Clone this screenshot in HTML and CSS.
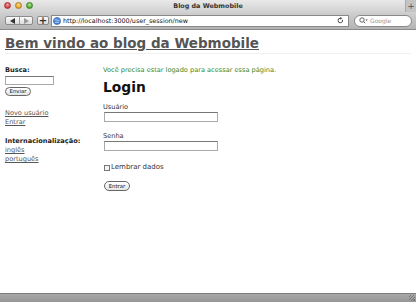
FILE: index.html
```html
<!DOCTYPE html>
<html>
<head>
<meta charset="utf-8">
<title>Blog da Webmobile</title>
<link rel="stylesheet" href="styles.css">
</head>
<body>
<div class="window">
  <div class="titlebar">
    <div class="lights">
      <span class="light red"></span>
      <span class="light yellow"></span>
      <span class="light green"></span>
    </div>
    <div class="title">Blog da Webmobile</div>
    <div class="tabbtn">+</div>
  </div>
  <div class="toolbar">
    <div class="nav">
      <span class="seg"><svg width="6" height="6" viewBox="0 0 6 6"><polygon points="5,0 5,6 0,3" fill="#333"/></svg></span>
      <span class="seg"><svg width="6" height="6" viewBox="0 0 6 6"><polygon points="1,0 1,6 6,3" fill="#999"/></svg></span>
    </div>
    <span class="plus">+</span>
    <div class="url">
      <svg class="globe" width="8" height="8" viewBox="0 0 8 8"><circle cx="4" cy="4" r="3.6" fill="#4a86d8" stroke="#2a5ea8" stroke-width="0.6"/><path d="M1.5 3 Q3 2 4 3 T6.5 3.2 M2 5.5 Q4 4.5 6 5.6" stroke="#dfeaf8" stroke-width="0.7" fill="none"/></svg>
      <span class="urltext">http://localhost:3000/user_session/new</span>
      <svg class="reload" width="7" height="7" viewBox="0 0 8 8"><path d="M6.3 3.2 A2.6 2.6 0 1 1 4 1.4" stroke="#444" stroke-width="1.1" fill="none"/><polygon points="3.6,0 6,1.5 3.6,3" fill="#444"/></svg>
    </div>
    <div class="search">
      <svg width="9" height="7" viewBox="0 0 9 7"><circle cx="3" cy="3" r="2.2" stroke="#555" stroke-width="0.9" fill="none"/><line x1="4.6" y1="4.6" x2="6" y2="6.2" stroke="#555" stroke-width="1"/><polygon points="6.5,2.5 8.8,2.5 7.65,4" fill="#555"/></svg>
      <span class="placeholder">Google</span>
    </div>
  </div>
  <div class="content">
    <h1 class="site-title"><a href="#">Bem vindo ao blog da Webmobile</a></h1>
    <div class="columns">
      <div class="sidebar">
        <div class="label-bold">Busca:</div>
        <div class="field-small"></div>
        <div class="btn">Enviar</div>
        <div class="links">
          <a href="#">Novo usuário</a>
          <a href="#">Entrar</a>
        </div>
        <div class="label-bold">Internacionalização:</div>
        <div class="links tight">
          <a href="#">inglês</a>
          <a href="#">português</a>
        </div>
      </div>
      <div class="main">
        <div class="notice">Você precisa estar logado para acessar essa página.</div>
        <h2 class="login">Login</h2>
        <div class="label">Usuário</div>
        <div class="field"></div>
        <div class="label second">Senha</div>
        <div class="field"></div>
        <div class="check"><span class="box"></span>Lembrar dados</div>
        <div class="btn">Entrar</div>
      </div>
    </div>
  </div>
  <div class="statusbar"><span class="grip"></span></div>
</div>
</body>
</html>
```
FILE: styles.css
```css
* { box-sizing: border-box; }
html, body { margin: 0; padding: 0; }
body { width: 416px; height: 302px; overflow: hidden; font-family: "DejaVu Sans", Verdana, sans-serif; background: #fff; }
.window { width: 416px; height: 302px; display: flex; flex-direction: column; }

.titlebar { height: 12px; position: relative; display: flex; align-items: center; justify-content: center; background: linear-gradient(#e9e9e9, #d2d2d2); }
.lights { position: absolute; left: 4px; top: 2px; display: flex; gap: 4px; }
.light { width: 7px; height: 7px; border-radius: 50%; display: block; }
.red { background: radial-gradient(circle at 50% 35%, #f7a3a3, #d23a3a 70%); border: 0.5px solid #a33; }
.yellow { background: radial-gradient(circle at 50% 35%, #fbe19a, #e3a021 70%); border: 0.5px solid #b07a15; }
.green { background: radial-gradient(circle at 50% 35%, #b6eb9c, #4ca72d 70%); border: 0.5px solid #3a7f22; }
.title { font-family: "DejaVu Sans", sans-serif; font-size: 6.4px; font-weight: bold; color: #333; }
.tabbtn { position: absolute; right: 0; top: 0; width: 11px; height: 12px; border-left: 1px solid #aaa; background: #c4c4c4; font-size: 9px; line-height: 12px; text-align: center; color: #555; }

.toolbar { height: 18px; display: flex; align-items: center; padding: 0 4px 0 5px; background: linear-gradient(#d0d0d0, #b4b4b4); border-bottom: 1px solid #8a8a8a; }
.nav { display: flex; height: 9px; border: 1px solid #8c8c8c; border-radius: 2px; background: linear-gradient(#fafafa, #dcdcdc); }
.seg { width: 13px; display: flex; align-items: center; justify-content: center; }
.seg + .seg { border-left: 1px solid #9a9a9a; }
.plus { margin-left: 4px; width: 12px; height: 9px; border: 1px solid #8c8c8c; border-radius: 2px; background: linear-gradient(#fafafa, #dcdcdc); font-size: 10px; font-weight: bold; line-height: 7px; text-align: center; color: #333; }
.url { margin-left: 2px; width: 298px; height: 12px; background: #fff; border: 1px solid #888; display: flex; align-items: center; padding: 0 4px 0 1px; }
.globe { flex: none; }
.urltext { margin-left: 2px; font-family: "DejaVu Sans", sans-serif; font-size: 6.4px; color: #111; flex: 1; }
.reload { flex: none; }
.search { margin-left: 5px; flex: 1; height: 12px; background: #fff; border: 1px solid #888; border-radius: 6px; display: flex; align-items: center; padding-left: 4px; }
.placeholder { margin-left: 2px; font-size: 6px; color: #9a9a9a; }

.content { flex: 1; padding: 5px 5px 0 5px; color: #333; }
.site-title { margin: 0; font-size: 13.5px; font-weight: bold; line-height: 16px; padding-bottom: 2px; border-bottom: 1px solid #f0f0f0; }
.site-title a { color: #555; text-decoration: underline; text-underline-offset: 1px; }
.columns { display: flex; margin-top: 12px; }
.sidebar { width: 98px; font-size: 6.6px; }
.label-bold { font-weight: bold; color: #222; line-height: 9px; }
.field-small { width: 49px; height: 9px; border: 1px solid #aaa; border-top-color: #777; margin-top: 1px; }
.btn { width: 26px; height: 9px; border: 1px solid #666; border-radius: 5px; font-size: 5.4px; line-height: 7px; text-align: center; color: #222; background: linear-gradient(#fff, #e6e6e6); margin-top: 2px; }
.links { display: flex; flex-direction: column; margin-top: 13px; margin-bottom: 10px; }
.links a { color: #555; line-height: 9px; }
.links.tight { margin-top: 0; }
.main { font-size: 6.6px; color: #333; }
.notice { color: #3a8a2c; line-height: 9px; }
.login { margin: 4px 0 0 0; font-size: 13.8px; line-height: 17px; color: #111; }
.label { line-height: 9px; margin-top: 7px; }
.label.second { margin-top: 10px; }
.field { width: 114px; height: 10px; border: 1px solid #aaa; border-top-color: #777; margin-top: 0; margin-left: 1px; }
.check { display: flex; align-items: center; margin-top: 12px; line-height: 9px; font-size: 7px; }
.box { width: 6px; height: 6px; border: 1px solid #777; margin-right: 1px; margin-left: 1px; background: #f4f4f4; }
.main .btn { margin-top: 9px; margin-left: 1px; height: 10px; line-height: 8px; }

.statusbar { height: 9px; background: linear-gradient(#a8a8a8, #979797); border-top: 1px solid #7c7c7c; position: relative; }
.grip { position: absolute; right: 1px; bottom: 1px; width: 6px; height: 6px; background: repeating-linear-gradient(135deg, transparent 0 1px, #777 1px 2px); }
```
